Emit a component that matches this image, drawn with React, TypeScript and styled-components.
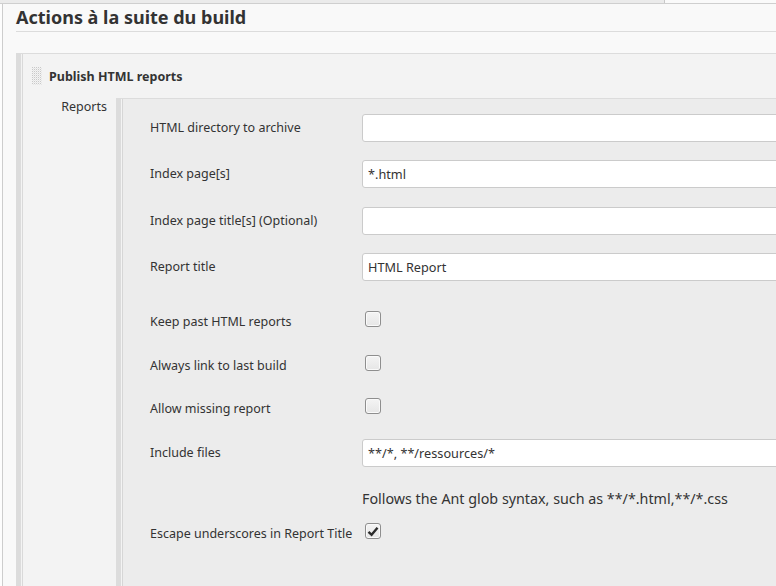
import React from "react";
import styled, { createGlobalStyle } from "styled-components";

const Global = createGlobalStyle`
  html, body { margin: 0; padding: 0; overflow: hidden; background: #fdfdfd; }
  body { font-family: "Noto Sans", "Open Sans", sans-serif; color: #333; }
  #root { width: 100vw; height: 100vh; overflow: hidden; }
`;

const Page = styled.div`
  width: 960px;
  min-height: 586px;
`;

const TopBar = styled.div`
  display: flex;
  height: 3px;
  border-bottom: 1px solid #cfcfcf;
  background: #fafafa;
`;

const TopTab = styled.div`
  width: 664px;
  background: #ebebeb;
  border-right: 1px solid #c8c8c8;
`;

const Main = styled.div`
  margin-left: 2px;
  border-left: 1px solid #cdcdcd;
  background: #f9f9f9;
  padding-left: 13px;
  min-height: 582px;
  display: flex;
  flex-direction: column;
`;

const Heading = styled.h1`
  margin: 0 0 21px 0;
  font-size: 18px;
  font-weight: 700;
  line-height: 27px;
  color: #333;
  border-bottom: 1px solid #dcdcdc;
`;

const Section = styled.div`
  flex: 1;
  display: flex;
  border-top: 1px solid #dcdcdc;
  border-left: 5px solid #dcdcdc;
  padding-left: 1px;
  background: #f3f3f3;
`;

const SectionInner = styled.div`
  flex: 1;
  display: flex;
  flex-direction: column;
  border-left: 1px solid #d9d9d9;
`;

const SectionHeader = styled.div`
  height: 44px;
  display: flex;
  align-items: center;
  gap: 7px;
  padding-left: 9px;
  font-size: 12.5px;
  font-weight: 700;
  color: #333;
`;

const Grip = styled.svg`
  display: block;
  width: 10px;
  height: 18px;
`;

const Body = styled.div`
  flex: 1;
  display: flex;
`;

const SideLabel = styled.div`
  width: 84px;
  padding-right: 9px;
  text-align: right;
  font-size: 12.5px;
  line-height: 18px;
  color: #333;
`;

const Nested = styled.div`
  flex: 1;
  display: flex;
  border-top: 1px solid #dcdcdc;
  border-left: 5px solid #dcdcdc;
  padding-left: 1px;
  background: #f3f3f3;
`;

const NestedInner = styled.div`
  flex: 1;
  border-left: 1px solid #d6d6d6;
  background: #ececec;
  padding-left: 27px;
  padding-bottom: 40px;
`;

const Row = styled.div<{ $mt: number }>`
  display: grid;
  grid-template-columns: 212px 1fr;
  align-items: center;
  height: 28px;
  margin-top: ${(p) => p.$mt}px;
`;

const Label = styled.label`
  font-size: 12.5px;
  line-height: 18px;
  color: #333;
  white-space: nowrap;
`;

const TextInput = styled.input`
  box-sizing: border-box;
  height: 28px;
  width: 100%;
  margin: 0;
  border: 1px solid #cbcbcb;
  border-radius: 3px;
  background: #fff;
  padding: 0 5px;
  font-family: "Noto Sans", "Open Sans", sans-serif;
  font-size: 12.7px;
  color: #333;
  outline: none;
`;

const Help = styled.div`
  grid-column: 2;
  font-size: 14.3px;
  color: #333;
  white-space: nowrap;
`;

const Box = styled.span`
  box-sizing: border-box;
  display: flex;
  align-items: center;
  justify-content: center;
  width: 16px;
  height: 16px;
  margin-left: 3px;
  margin-bottom: 6px;
  border: 1px solid #8e8e8e;
  border-radius: 3px;
  background: linear-gradient(#f4f4f4, #e6e6e6);
  box-shadow: inset 0 0 0 1px #fafafa;
`;

const Check = ({ checked }: { checked?: boolean }) => (
  <Box>
    {checked && (
      <svg width="12" height="11" viewBox="0 0 12 11">
        <path d="M1.5 5.8 L4.6 8.8 L10.5 1.8" fill="none" stroke="#2b2b2b" strokeWidth="2.4" strokeLinejoin="miter" />
      </svg>
    )}
  </Box>
);

const GripIcon = () => (
  <Grip viewBox="0 0 10 18">
    <defs>
      <pattern id="dots" width="2" height="2" patternUnits="userSpaceOnUse">
        <rect x="0" y="0" width="1" height="1" fill="#c9c9c9" />
        <rect x="1" y="1" width="1" height="1" fill="#e6e6e6" />
      </pattern>
    </defs>
    <rect x="0" y="0" width="10" height="18" fill="url(#dots)" />
  </Grip>
);

const textRows = [
  { label: "HTML directory to archive", value: "", mt: 15 },
  { label: "Index page[s]", value: "*.html", mt: 18 },
  { label: "Index page title[s] (Optional)", value: "", mt: 19 },
  { label: "Report title", value: "HTML Report", mt: 18 },
];

const checkRows = [
  { label: "Keep past HTML reports", mt: 27 },
  { label: "Always link to last build", mt: 16 },
  { label: "Allow missing report", mt: 15 },
];

export default function App() {
  return (
    <>
      <Global />
      <Page>
        <TopBar>
          <TopTab />
        </TopBar>
        <Main>
          <Heading>Actions à la suite du build</Heading>
          <Section>
            <SectionInner>
              <SectionHeader>
                <GripIcon />
                Publish HTML reports
              </SectionHeader>
              <Body>
                <SideLabel>Reports</SideLabel>
                <Nested>
                  <NestedInner>
                    {textRows.map((r) => (
                      <Row key={r.label} $mt={r.mt}>
                        <Label>{r.label}</Label>
                        <TextInput defaultValue={r.value} readOnly />
                      </Row>
                    ))}
                    {checkRows.map((r) => (
                      <Row key={r.label} $mt={r.mt}>
                        <Label>{r.label}</Label>
                        <Check />
                      </Row>
                    ))}
                    <Row $mt={16}>
                      <Label>Include files</Label>
                      <TextInput defaultValue="**/*, **/ressources/*" readOnly />
                    </Row>
                    <Row $mt={17}>
                      <Help>Follows the Ant glob syntax, such as **/*.html,**/*.css</Help>
                    </Row>
                    <Row $mt={8}>
                      <Label>Escape underscores in Report Title</Label>
                      <Check checked />
                    </Row>
                  </NestedInner>
                </Nested>
              </Body>
            </SectionInner>
          </Section>
        </Main>
      </Page>
    </>
  );
}
